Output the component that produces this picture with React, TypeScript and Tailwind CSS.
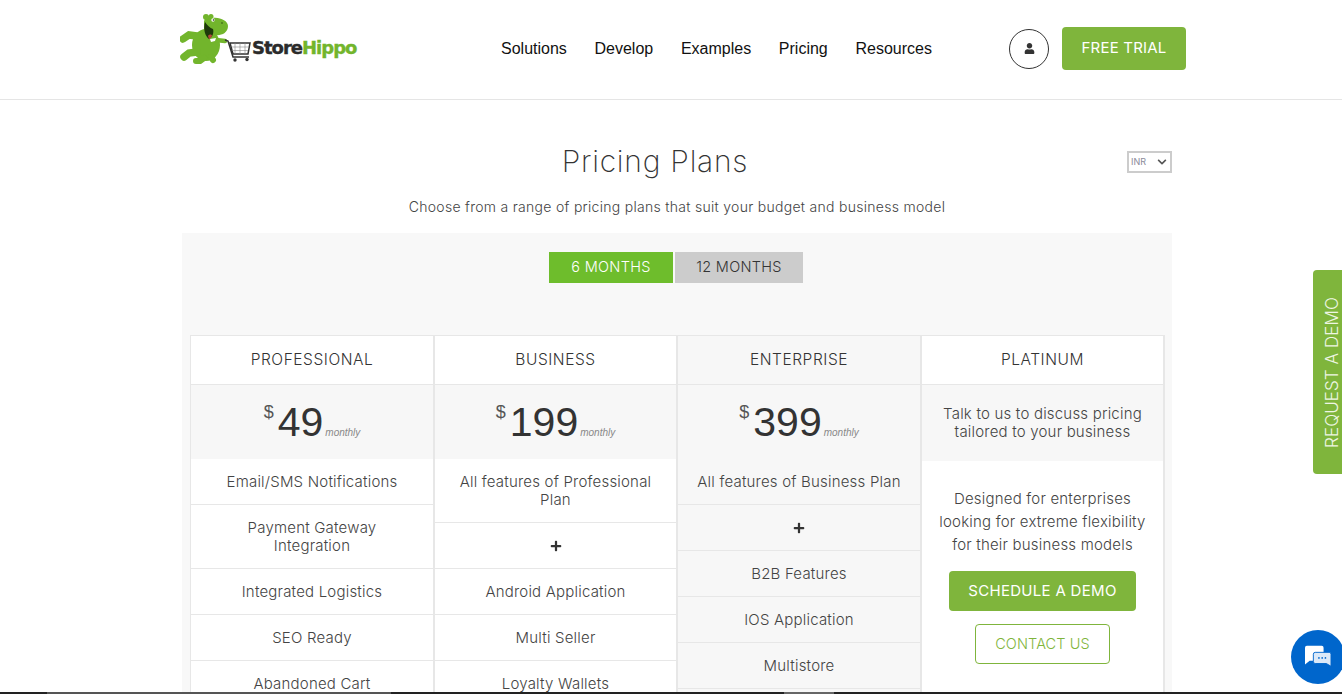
import React from "react";
import { FaUser, FaPlus, FaChevronDown } from "react-icons/fa";

const M = "font-['Inter','Liberation_Sans',sans-serif]";

function Logo() {
  const g = "#72b52c";
  return (
    <div className="relative flex h-[52px] w-[178px] items-start">
      <svg width="80" height="52" viewBox="0 0 80 52" className="shrink-0">
        <g fill={g}>
          <ellipse cx="26" cy="32" rx="14" ry="16" />
          <path d="M24 8 C26 3 30 2 33 5 C40 4 48 8 48 13 C48 20 41 23 35 22 C32 24 28 23 24 18 Z" />
          <circle cx="26" cy="4" r="3" />
          <circle cx="31" cy="3.5" r="2.5" />
        </g>
        <g stroke={g} strokeLinecap="round" fill="none">
          <path d="M17 23 L9 22 L3 26" strokeWidth="7.5" />
          <path d="M17 39 L9 40 L4 44" strokeWidth="7.5" />
          <path d="M24 45 L20 48 L16 48" strokeWidth="6" />
          <path d="M31 44 L33 47" strokeWidth="6" />
          <path d="M36 27 L45 28" strokeWidth="4.5" />
        </g>
        <path d="M25 9 C23 16 25 23 29 26 C33 24 34 19 33 16 C30 15 27 12 25 9 Z" fill="#1d3a0a" />
        <path d="M28 23 C29 21 32 21 32 23 C31 25 30 26 29 26 Z" fill="#b5473c" />
        <path d="M30 26 L36 25 L35 28 L31 29 Z" fill="#fff" />
        <circle cx="33" cy="7" r="1.7" fill="#fff" />
        <circle cx="33.5" cy="7" r="0.8" fill="#222" />
        <circle cx="42" cy="10" r="0.7" fill="#1d3a0a" />
        <path d="M45 27 L48 28 L53 44 L69 44" fill="none" stroke="#333" strokeWidth="1.5" />
        <path d="M50 30 H70 L68 41 H53 Z" fill="#fff" stroke="#333" strokeWidth="1.5" />
        <path d="M52 34 H69 M52 37.5 H68 M55 30 V41 M60 30 V41 M65 30 V41" stroke="#888" strokeWidth="0.6" />
        <circle cx="55" cy="47" r="1.7" fill="#333" />
        <circle cx="67" cy="46.5" r="1.7" fill="#333" />
      </svg>
      <div className="ml-[-8px] mt-[24px] text-[18px] font-bold leading-[22px] tracking-[-1px] font-['DejaVu_Sans',sans-serif] [-webkit-text-stroke:0.4px]">
        <span className="text-[#2b2b2b]">Store</span>
        <span className="text-[#72b52c]">Hippo</span>
      </div>
    </div>
  );
}

function Cell({ children, h, shaded }: { children?: React.ReactNode; h: string; shaded?: boolean }) {
  return (
    <div className={`flex shrink-0 items-center justify-center border-b border-[#e7e7e7] px-[14px] text-center text-[15px] font-light leading-[18px] tracking-[0.2px] text-[#444] ${h} ${shaded ? "bg-[#f7f7f7]" : ""}`}>
      <span>{children}</span>
    </div>
  );
}

function Price({ amount }: { amount: string }) {
  return (
    <div className="flex h-[74px] shrink-0 items-start justify-center bg-[#f7f7f7] pt-[14px] font-['Liberation_Sans',sans-serif]">
      <span className="mt-[3px] mr-[4px] text-[18px] leading-[20px] text-[#555]">$</span>
      <span className="text-[41px] leading-[46px] text-[#333]">{amount}</span>
      <span className="mt-[27px] ml-[2px] text-[10px] italic leading-[14px] text-[#888]">monthly</span>
    </div>
  );
}

function Plus() {
  return <FaPlus className="text-[12px] text-[#333]" />;
}

function Head({ children, shaded }: { children: React.ReactNode; shaded?: boolean }) {
  return (
    <div className={`flex h-[49px] shrink-0 items-center justify-center border-b border-[#e7e7e7] text-[15.5px] font-light tracking-[0.55px] text-[#333] ${shaded ? "bg-[#f7f7f7]" : ""}`}>
      {children}
    </div>
  );
}

export default function App() {
  return (
    <div className={`relative h-[694px] w-[1342px] overflow-hidden bg-white ${M}`}>
      <header className="flex h-[100px] items-start border-b border-[#e5e5e5] pl-[180px] pr-[156px]">
        <div className="mt-[13px] w-[321px] shrink-0">
          <Logo />
        </div>
        <nav className="mt-[39px] flex gap-[27.7px] text-[16px] leading-[20px] text-[#111] font-['Liberation_Sans',sans-serif]">
          <a>Solutions</a>
          <a>Develop</a>
          <a>Examples</a>
          <a>Pricing</a>
          <a>Resources</a>
        </nav>
        <div className="ml-auto mt-[27px] flex items-center gap-[13px]">
          <div className="flex h-[40px] w-[40px] items-center justify-center rounded-full border border-[#333]">
            <FaUser className="text-[11px] text-[#333]" />
          </div>
          <div className="flex h-[43px] w-[124px] items-center justify-center rounded-[4px] bg-[#7fb53c] text-[15px] tracking-[0.2px] text-white">
            FREE TRIAL
          </div>
        </div>
      </header>

      <main className="relative ml-[182px] w-[990px]">
        <div className="relative flex h-[133px] flex-col items-center">
          <h1 className="mt-[43px] ml-[-44px] text-[30px] font-extralight leading-[36px] tracking-[0.75px] text-[#333]">Pricing Plans</h1>
          <p className="mt-[18px] text-[14px] font-light leading-[20px] tracking-[0.29px] text-[#444]">
            Choose from a range of pricing plans that suit your budget and business model
          </p>
          <div className="absolute right-0 top-[51px] flex h-[22px] w-[45px] items-center justify-between border-2 border-[#ccc] pl-[2px] pr-[3px] text-[9px] text-[#8a8a9a]">
            INR
            <FaChevronDown className="text-[10px] text-[#555]" />
          </div>
        </div>

        <section className="h-[470px] bg-[#f8f8f8] px-[8px] pt-[19px]">
          <div className="ml-[359px] flex gap-[2px] text-[14.5px] font-light tracking-[0.3px]">
            <div className="flex h-[31px] w-[124px] items-center justify-center bg-[#6ebd2c] pb-[1px] text-white">6 MONTHS</div>
            <div className="flex h-[31px] w-[128px] items-center justify-center bg-[#cccccc] pb-[1px] text-[#333]">12 MONTHS</div>
          </div>

          <div className="mt-[52px] flex h-[410px] w-[975px] border-t border-l border-[#e7e7e7]">
            <div className="flex w-[244px] flex-col border-r-2 border-[#e7e7e7] bg-white">
              <Head>PROFESSIONAL</Head>
              <Price amount="49" />
              <Cell h="h-[46px]">Email/SMS Notifications</Cell>
              <Cell h="h-[64px]">Payment Gateway<br />Integration</Cell>
              <Cell h="h-[46px]">Integrated Logistics</Cell>
              <Cell h="h-[46px]">SEO Ready</Cell>
              <Cell h="h-[46px]">Abandoned Cart</Cell>
            </div>
            <div className="flex w-[243px] flex-col border-r-2 border-[#e7e7e7] bg-white">
              <Head>BUSINESS</Head>
              <Price amount="199" />
              <Cell h="h-[64px]">All features of Professional<br />Plan</Cell>
              <Cell h="h-[46px]"><Plus /></Cell>
              <Cell h="h-[46px]">Android Application</Cell>
              <Cell h="h-[46px]">Multi Seller</Cell>
              <Cell h="h-[46px]">Loyalty Wallets</Cell>
            </div>
            <div className="flex w-[244px] flex-col border-r-2 border-[#e7e7e7] bg-[#f7f7f7]">
              <Head shaded>ENTERPRISE</Head>
              <Price amount="399" />
              <Cell shaded h="h-[46px]">All features of Business Plan</Cell>
              <Cell shaded h="h-[46px]"><Plus /></Cell>
              <Cell shaded h="h-[46px]">B2B Features</Cell>
              <Cell shaded h="h-[46px]">IOS Application</Cell>
              <Cell shaded h="h-[46px]">Multistore</Cell>
              <Cell shaded h="h-[46px]" />
            </div>
            <div className="flex w-[243px] flex-col border-r-2 border-[#e7e7e7] bg-white">
              <Head>PLATINUM</Head>
              <div className="flex h-[76px] shrink-0 items-center justify-center bg-[#f7f7f7] text-center text-[15px] font-light leading-[18px] tracking-[0.2px] text-[#444]">
                <span>Talk to us to discuss pricing<br />tailored to your business</span>
              </div>
              <div className="flex flex-col items-center pt-[26px]">
                <p className="text-center text-[15px] font-light leading-[23px] tracking-[0.2px] text-[#444]">
                  Designed for enterprises<br />looking for extreme flexibility<br />for their business models
                </p>
                <div className="mt-[15px] flex h-[40px] w-[187px] items-center justify-center rounded-[4px] bg-[#7fb53c] text-[15px] tracking-[0.3px] text-white">
                  SCHEDULE A DEMO
                </div>
                <div className="mt-[13px] flex h-[40px] w-[135px] items-center justify-center rounded-[4px] border border-[#7fb53c] text-[14.5px] font-light tracking-[0.1px] text-[#7fb53c]">
                  CONTACT US
                </div>
              </div>
            </div>
          </div>
        </section>
      </main>

      <div className="absolute right-0 top-[270px] flex h-[204px] w-[29px] items-center justify-center rounded-l-[4px] bg-[#7fb53c] pl-[10px]">
        <span className="rotate-180 whitespace-nowrap text-[17px] font-light tracking-[0.1px] text-[#eef5e3] [writing-mode:vertical-rl]">REQUEST A DEMO</span>
      </div>

      <div className="absolute left-[1291px] top-[630px] flex h-[54px] w-[54px] items-center justify-center rounded-full bg-[#0066cc]">
        <svg width="30" height="26" viewBox="0 0 32 28">
          <path d="M4 2 H20 A2 2 0 0 1 22 4 V16 A2 2 0 0 1 20 18 H7 L2 22 V4 A2 2 0 0 1 4 2 Z" fill="#fff" />
          <path d="M13 9 H28 A2 2 0 0 1 30 11 V24 L25 21 H13 A2 2 0 0 1 11 19 V11 A2 2 0 0 1 13 9 Z" fill="#dbe9f8" stroke="#0066cc" strokeWidth="1" />
          <circle cx="17" cy="15" r="0.9" fill="#0066cc" />
          <circle cx="20.5" cy="15" r="0.9" fill="#0066cc" />
          <circle cx="24" cy="15" r="0.9" fill="#0066cc" />
        </svg>
      </div>

      <div className="absolute bottom-0 left-0 flex h-[2px] w-full bg-[#222]">
        <div className="ml-[47px] w-[344px] bg-[#555]" />
        <div className="ml-[393px] w-[50px] bg-[#666]" />
      </div>
    </div>
  );
}
